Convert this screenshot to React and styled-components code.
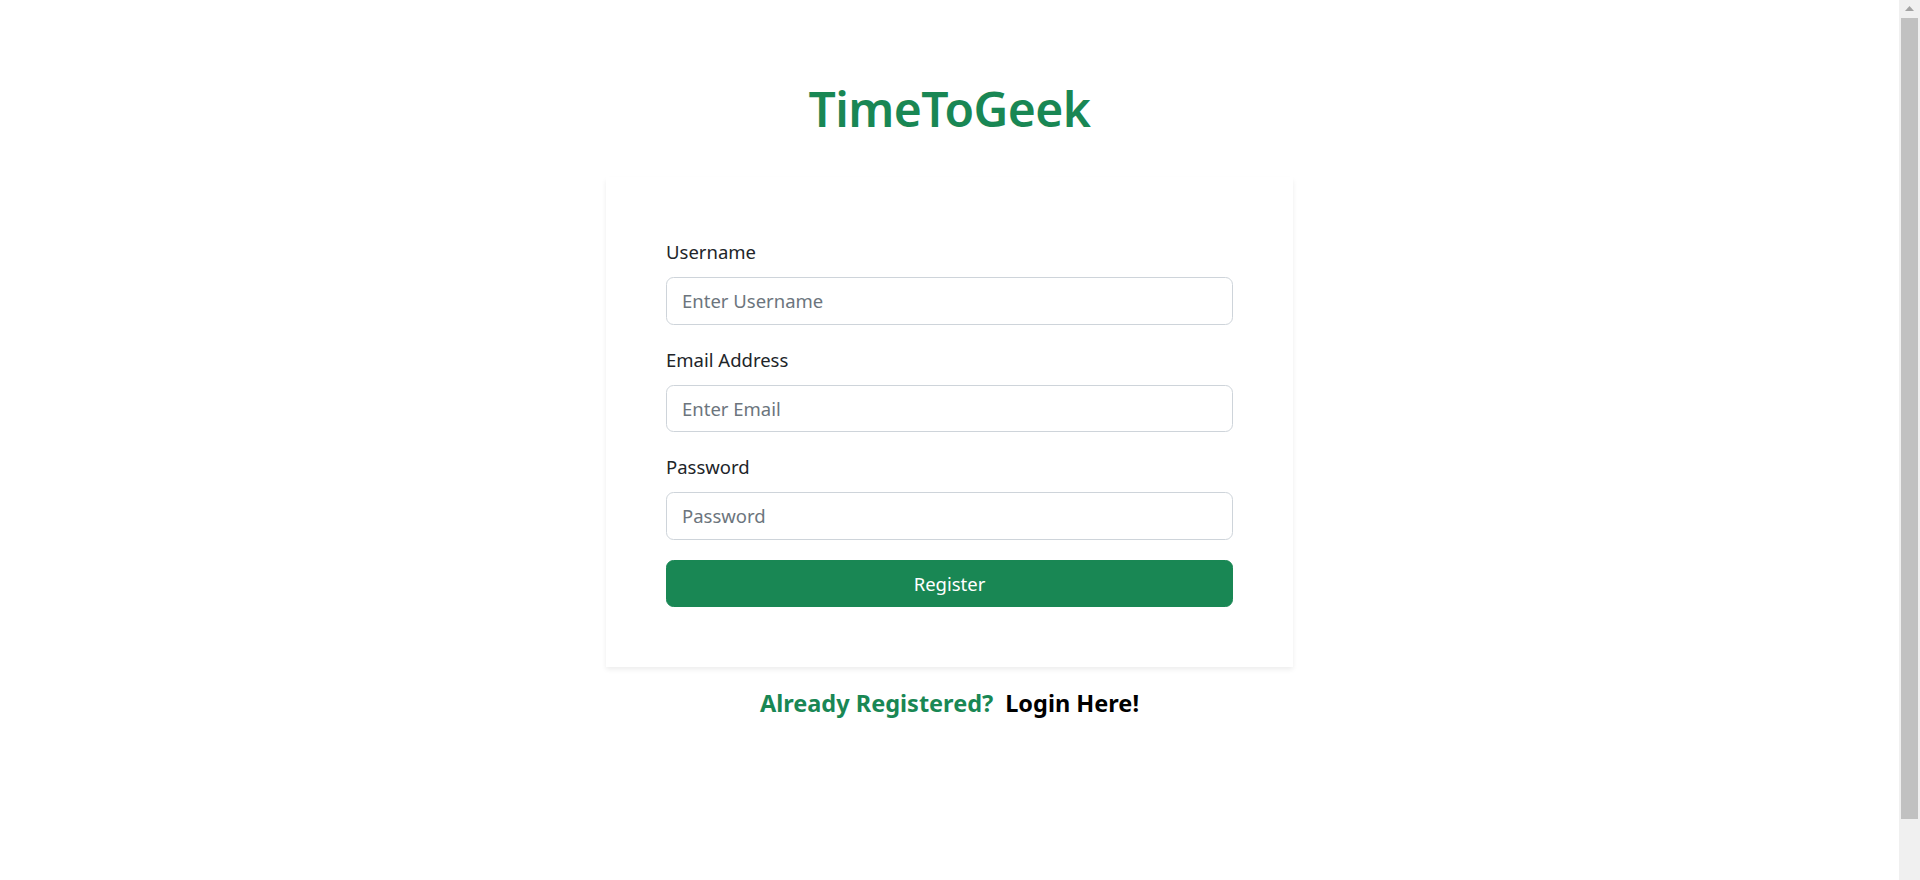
import React from "react";
import styled, { createGlobalStyle } from "styled-components";

const GREEN = "#198754";

const Global = createGlobalStyle`
  body {
    margin: 0;
    background: #ffffff;
    font-family: "Noto Sans", "Open Sans", sans-serif;
    color: #212529;
    overflow: hidden;
  }
  * { box-sizing: border-box; }
`;

const Page = styled.main`
  min-height: 100vh;
  margin-right: 21px;
  display: flex;
  flex-direction: column;
  align-items: center;
  padding-top: 79px;
`;

const ScrollBar = styled.div`
  position: fixed;
  top: 0;
  right: 0;
  bottom: 0;
  width: 21px;
  background: #f0f0f0;
  display: flex;
  flex-direction: column;
  align-items: stretch;
`;

const ScrollArrow = styled.div`
  height: 18px;
  display: flex;
  justify-content: center;
  padding-top: 6px;
`;

const ScrollThumb = styled.div`
  height: 801px;
  margin: 0 2px;
  background: #c1c1c1;
`;

const Title = styled.h1`
  margin: 0 0 38px;
  font-size: 48px;
  line-height: 60px;
  font-weight: 600;
  color: ${GREEN};
  letter-spacing: -0.6px;
`;

const Card = styled.section`
  width: 687px;
  padding: 60px;
  background: #fff;
  box-shadow: 0 2.5px 5px rgba(0, 0, 0, 0.075);
`;

const Form = styled.form`
  display: flex;
  flex-direction: column;
`;

const Field = styled.div`
  display: flex;
  flex-direction: column;
  margin-bottom: 20px;
`;

const Label = styled.label`
  font-size: 18.5px;
  line-height: 30px;
  margin-bottom: 10px;
  color: #212529;
`;

const Input = styled.input`
  height: 47.5px;
  padding: 0 15px;
  font-family: inherit;
  font-size: 18.5px;
  color: #212529;
  background: #fff;
  border: 1.25px solid #ced4da;
  border-radius: 7.5px;
  outline: none;
  &::placeholder {
    color: #6c757d;
  }
`;

const Button = styled.button`
  height: 47.5px;
  width: 100%;
  font-family: inherit;
  font-size: 18.5px;
  color: #fff;
  background: ${GREEN};
  border: 1.25px solid ${GREEN};
  border-radius: 7.5px;
  cursor: pointer;
`;

const Footer = styled.p`
  margin: 21px 0 0;
  font-size: 23.5px;
  line-height: 30px;
  font-weight: 700;
  display: flex;
  gap: 12px;
`;

const Question = styled.span`
  color: ${GREEN};
`;

const LoginLink = styled.a`
  color: #000;
  text-decoration: none;
`;

export default function App() {
  return (
    <>
      <Global />
      <Page>
        <Title>TimeToGeek</Title>
        <Card>
          <Form onSubmit={(e) => e.preventDefault()}>
            <Field>
              <Label htmlFor="username">Username</Label>
              <Input id="username" type="text" placeholder="Enter Username" />
            </Field>
            <Field>
              <Label htmlFor="email">Email Address</Label>
              <Input id="email" type="email" placeholder="Enter Email" />
            </Field>
            <Field>
              <Label htmlFor="password">Password</Label>
              <Input id="password" type="password" placeholder="Password" />
            </Field>
            <Button type="submit">Register</Button>
          </Form>
        </Card>
        <Footer>
          <Question>Already Registered?</Question>
          <LoginLink href="#">Login Here!</LoginLink>
        </Footer>
      </Page>
      <ScrollBar aria-hidden="true">
        <ScrollArrow>
          <svg width="9" height="5" viewBox="0 0 9 5">
            <path d="M0 5 L4.5 0 L9 5 Z" fill="#a3a3a3" />
          </svg>
        </ScrollArrow>
        <ScrollThumb />
      </ScrollBar>
    </>
  );
}
